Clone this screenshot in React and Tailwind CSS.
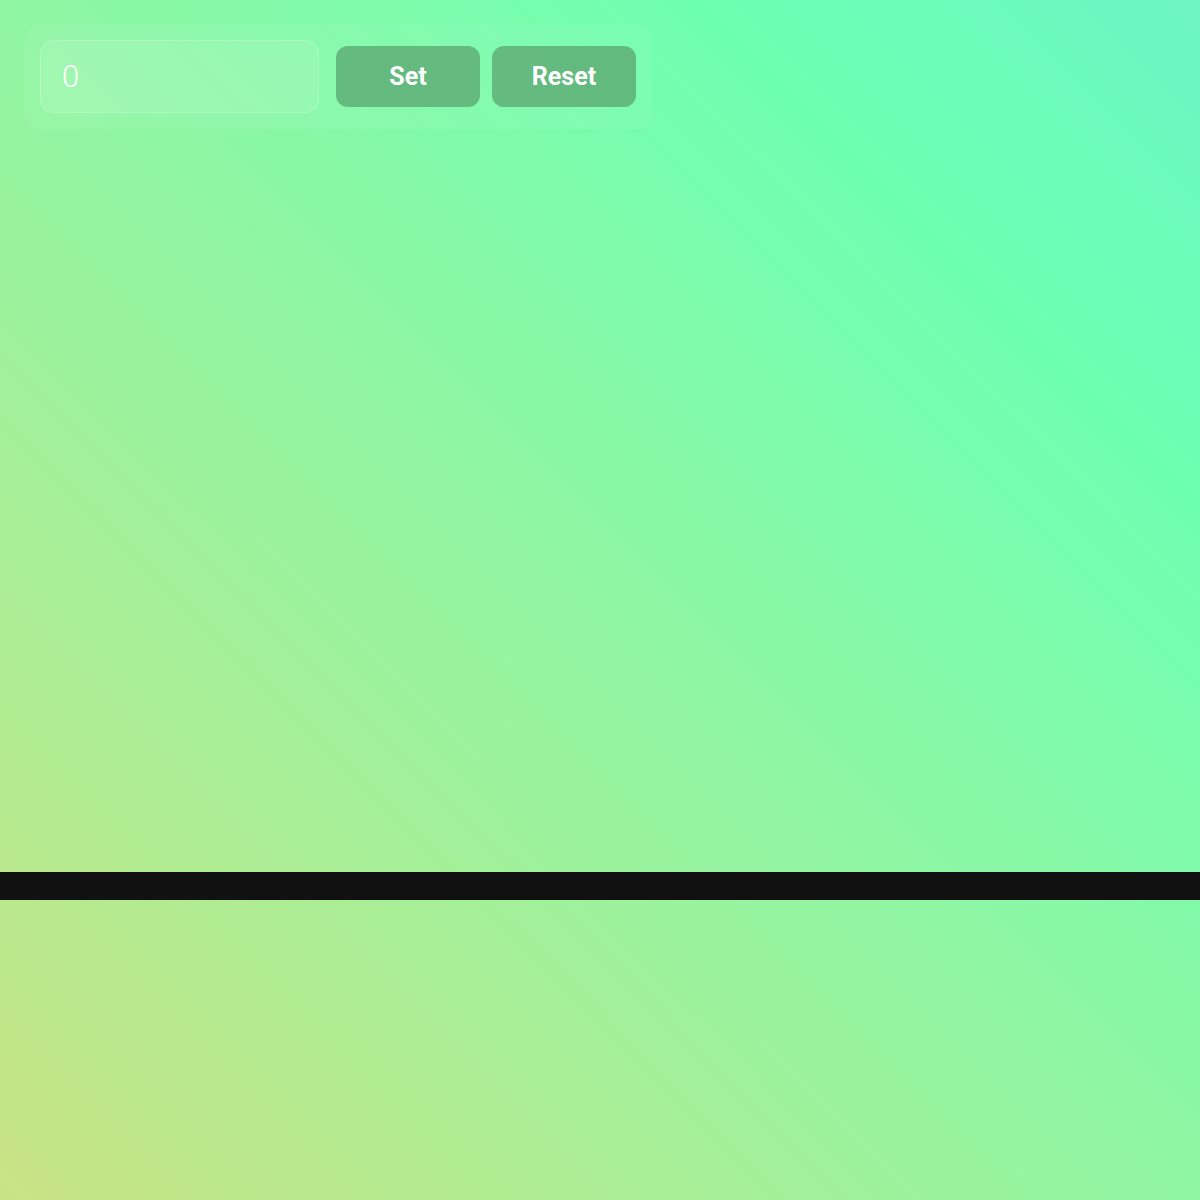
import { useState } from 'react'

function App() {
  const [value, setValue] = useState('0')

  return (
    <div className="min-h-[1200px] h-[1200px] flex flex-col bg-[linear-gradient(45deg,#c8e385_0%,#95f4a0_45%,#6dffb2_80%,#6cf5c4_100%)] font-['Roboto',sans-serif]">
      <div className="h-[872px] p-6">
        <div className="inline-flex items-center p-4 rounded-2xl bg-white/5">
          <input
            type="text"
            value={value}
            onChange={(e) => setValue(e.target.value)}
            className="w-[279px] h-[73px] px-[21px] rounded-[14px] border border-white/20 bg-white/10 text-white text-[31px] font-light outline-none"
          />
          <button
            type="button"
            onClick={() => setValue(value)}
            className="ml-[17px] w-[144px] h-[61px] rounded-xl bg-[#62b67c]/95 text-white text-[25px] font-bold"
          >
            Set
          </button>
          <button
            type="button"
            onClick={() => setValue('0')}
            className="ml-3 w-[144px] h-[61px] rounded-xl bg-[#62b67c]/95 text-white text-[25px] font-bold"
          >
            Reset
          </button>
        </div>
      </div>
      <div className="h-7 bg-[#111111]" />
      <div className="flex-1" />
    </div>
  )
}

export default App
